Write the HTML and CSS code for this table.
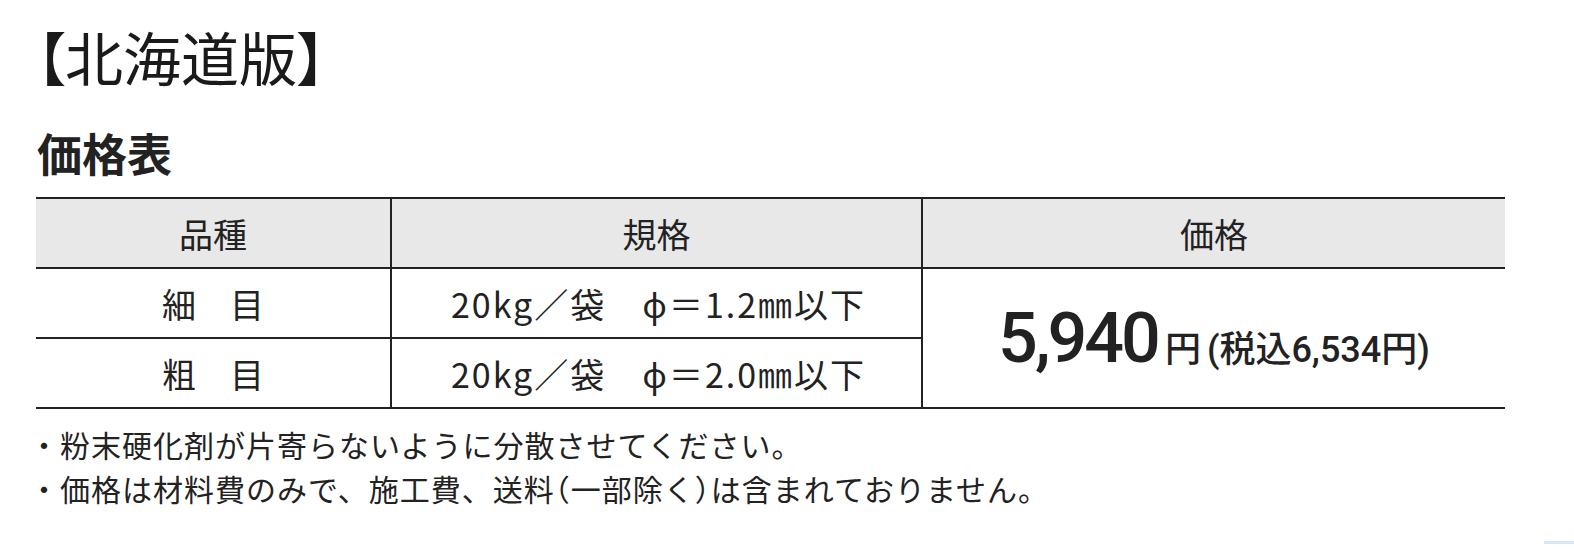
FILE: index.html
```
<!DOCTYPE html>
<html lang="ja">
<head>
<meta charset="utf-8">
<title>北海道版 価格表</title>
<link rel="stylesheet" href="styles.css">
</head>
<body>
<main class="page">
  <h1 class="title"><span class="br">【</span>北海道版<span class="br">】</span></h1>
  <h2 class="subtitle">価格表</h2>
  <table class="price-table">
    <colgroup>
      <col class="c1">
      <col class="c2">
      <col class="c3">
    </colgroup>
    <thead>
      <tr>
        <th>品種</th>
        <th>規格</th>
        <th>価格</th>
      </tr>
    </thead>
    <tbody>
      <tr>
        <td>細　目</td>
        <td class="spec">20kg／袋　ϕ＝1.2㎜以下</td>
        <td class="price" rowspan="2"><span class="num">5,940</span><span class="yen">円</span><span class="tax">(税込6,534円)</span></td>
      </tr>
      <tr>
        <td>粗　目</td>
        <td class="spec">20kg／袋　ϕ＝2.0㎜以下</td>
      </tr>
    </tbody>
  </table>
  <ul class="notes">
    <li>・粉末硬化剤が片寄らないように分散させてください。</li>
    <li>・価格は材料費のみで、施工費、送料<span class="hp">（</span>一部除く<span class="hp">）</span>は含まれておりません。</li>
  </ul>
</main>
<div class="edge-mark"></div>
</body>
</html>
```
FILE: styles.css
```
html, body {
  margin: 0;
  padding: 0;
  background: #ffffff;
}
body {
  font-family: "Noto Sans CJK JP", "Noto Sans", sans-serif;
  color: #222222;
  width: 1574px;
  height: 550px;
  overflow: hidden;
  position: relative;
}
.page {
  padding-left: 36px;
  padding-top: 27px;
}
.title {
  margin: 0;
  font-size: 58px;
  line-height: 58px;
  font-weight: 400;
  color: #1a1a1a;
}
.br {
  font-feature-settings: "palt";
}
.subtitle {
  margin: 45px 0 0 1px;
  font-size: 45px;
  line-height: 45px;
  font-weight: 700;
  color: #222222;
}
.price-table {
  margin-top: 22px;
  width: 1469px;
  border-collapse: collapse;
  table-layout: fixed;
}
.c1 { width: 355px; }
.c2 { width: 531px; }
.c3 { width: 583px; }
.price-table th,
.price-table td {
  border-top: 2px solid #222222;
  border-bottom: 2px solid #222222;
  border-left: 2px solid #222222;
  padding: 0;
  text-align: center;
  vertical-align: middle;
  font-size: 34px;
  font-weight: 400;
  color: #222222;
}
.price-table th:first-child,
.price-table td:first-child {
  border-left: none;
}
.price-table th {
  background: #e8e8e8;
}
.price-table tr {
  height: 70px;
}
.price-table td.spec {
  letter-spacing: 2px;
  padding-left: 4px;
}
.price {
  font-family: Roboto, "Noto Sans CJK JP", sans-serif;
  color: #1c1c1c;
}
.num {
  font-size: 70px;
  font-weight: 500;
  letter-spacing: -3px;
  margin-right: 7px;
}
.yen {
  font-size: 36px;
  font-weight: 500;
}
.tax {
  font-size: 36px;
  font-weight: 500;
  margin-left: 6px;
}
.notes {
  list-style: none;
  margin: 13px 0 0 -7px;
  padding: 0;
  font-size: 30px;
  line-height: 44px;
  letter-spacing: 1px;
  color: #222222;
}
.hp {
  font-feature-settings: "halt";
}
.edge-mark {
  position: absolute;
  right: 0;
  top: 541px;
  width: 30px;
  height: 3px;
  background: #d4e8f8;
}
```
